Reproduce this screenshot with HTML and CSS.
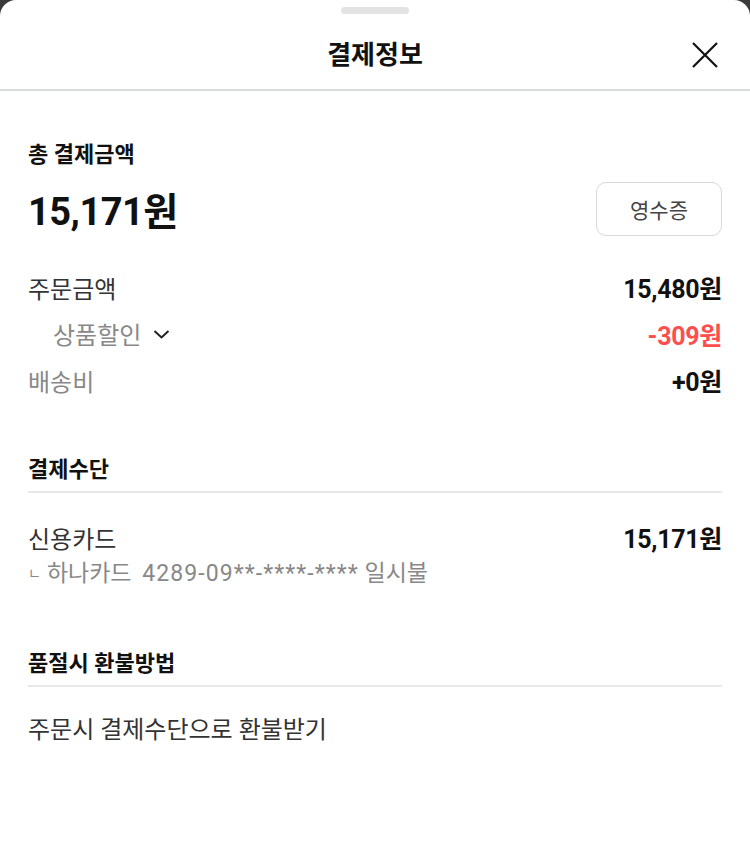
FILE: index.html
```html
<!DOCTYPE html>
<html lang="ko">
<head>
<meta charset="utf-8">
<link rel="stylesheet" href="styles.css">
</head>
<body>
<div class="sheet">
  <div class="handle"></div>
  <header class="header">
    <h1 class="title">결제정보</h1>
    <button class="close" aria-label="닫기">
      <svg width="28" height="28" viewBox="0 0 28 28"><path d="M2 2L26 26M26 2L2 26" stroke="#111" stroke-width="2.2" fill="none"/></svg>
    </button>
  </header>
  <section class="total">
    <div class="label-strong">총 결제금액</div>
    <div class="total-row">
      <div class="total-amount">15,171원</div>
      <button class="receipt">영수증</button>
    </div>
  </section>
  <section class="breakdown">
    <div class="row"><span class="key dark">주문금액</span><span class="val">15,480원</span></div>
    <div class="row"><span class="key sub">상품할인
      <svg class="chev" width="17" height="10" viewBox="0 0 17 10"><path d="M1.5 2L8.5 8.5L15.5 2" stroke="#222" stroke-width="2" fill="none"/></svg></span><span class="val red">-309원</span></div>
    <div class="row"><span class="key">배송비</span><span class="val">+0원</span></div>
  </section>
  <section class="block">
    <h2 class="block-title">결제수단</h2>
    <div class="row pay"><span class="key dark">신용카드</span><span class="val">15,171원</span></div>
    <div class="card-info"><span class="mark">ㄴ</span>하나카드 <span class="num">4289-09**-****-****</span> 일시불</div>
  </section>
  <section class="block second">
    <h2 class="block-title">품절시 환불방법</h2>
    <div class="refund">주문시 결제수단으로 환불받기</div>
  </section>
</div>
</body>
</html>
```

FILE: styles.css
```css
* { box-sizing: border-box; }
html, body { margin: 0; padding: 0; }
body {
  background: #3a3a3a;
  font-family: "Roboto", "Noto Sans CJK KR", sans-serif;
  color: #111;
}
.sheet {
  background: #fff;
  border-radius: 16px 16px 0 0;
  min-height: 848px;
  padding-top: 7px;
}
.handle {
  width: 68px;
  height: 7px;
  border-radius: 4px;
  background: #e3e3e3;
  margin: 0 auto;
}
.header {
  position: relative;
  height: 77px;
  border-bottom: 2px solid #d9dcdf;
  display: flex;
  align-items: center;
  justify-content: center;
  padding-top: 7px;
}
.title {
  margin: 0;
  font-size: 26px;
  font-weight: 700;
  color: #111;
  line-height: 32px;
}
.close {
  position: absolute;
  right: 31px;
  top: 27px;
  width: 28px;
  height: 28px;
  padding: 0;
  border: 0;
  background: none;
}
.close svg { display: block; }
.total { padding: 49px 28px 0; }
.label-strong {
  font-size: 22px;
  font-weight: 700;
  line-height: 30px;
}
.total-row {
  display: flex;
  justify-content: space-between;
  align-items: flex-start;
  margin-top: 12px;
}
.total-amount {
  font-size: 38px;
  font-weight: 700;
  letter-spacing: -0.5px;
  line-height: 48px;
  margin-top: 6px;
}
.receipt {
  width: 126px;
  height: 54px;
  border: 1.5px solid #d9d9d9;
  border-radius: 10px;
  background: #fff;
  font-family: inherit;
  font-size: 21px;
  color: #444;
}
.breakdown { padding: 28px 28px 0; }
.row {
  display: flex;
  justify-content: space-between;
  align-items: center;
  height: 46px;
  font-size: 24px;
}
.breakdown .row:nth-child(2) { height: 47px; }
.key { color: #888; display: flex; align-items: center; gap: 12px; }
.key.dark { color: #333; }
.key.sub { padding-left: 25px; }
.chev { margin-top: 1px; }
.val { font-weight: 700; color: #111; font-size: 25px; letter-spacing: -0.3px; }
.val.red { color: #ff4d4d; }
.block { padding: 52px 28px 0; }
.block.second { padding-top: 62px; }
.block-title {
  margin: 0;
  font-size: 22px;
  font-weight: 700;
  line-height: 30px;
  padding-bottom: 6px;
  border-bottom: 2px solid #e8e8e8;
}
.row.pay { margin-top: 21px; }
.card-info {
  font-size: 23px;
  color: #888;
  line-height: 26px;
}
.card-info .mark {
  font-size: 14px;
  margin-right: 6px;
  vertical-align: 3px;
}
.card-info .num {
  margin-left: 5px;
  letter-spacing: 1.1px;
}
.refund {
  margin-top: 28px;
  font-size: 24px;
  line-height: 30px;
  color: #333;
}
```
